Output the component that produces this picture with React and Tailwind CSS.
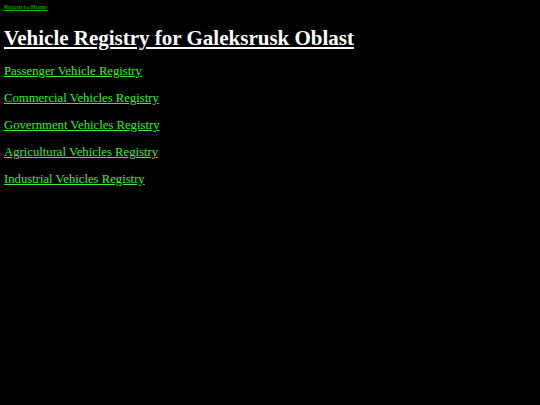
const LINKS = [
  'Passenger Vehicle Registry',
  'Commercial Vehicles Registry',
  'Government Vehicles Registry',
  'Agricultural Vehicles Registry',
  'Industrial Vehicles Registry',
]

export default function App() {
  return (
    <div className="min-h-[405px] bg-black px-1 pt-[3px] font-['Liberation_Serif',serif]">
      <a href="#" className="block text-[6.7px] leading-[8px] text-[#00cc00] underline">Return to Home</a>
      <h1 className="mt-[15px] text-[21px] leading-[24px] font-bold text-white underline">
        Vehicle Registry for Galeksrusk Oblast
      </h1>
      <div className="mt-[14px] flex flex-col gap-[12px]">
        {LINKS.map((l) => (
          <a key={l} href="#" className="block text-[12.7px] leading-[15px] text-[#33ee33] underline">{l}</a>
        ))}
      </div>
    </div>
  )
}
